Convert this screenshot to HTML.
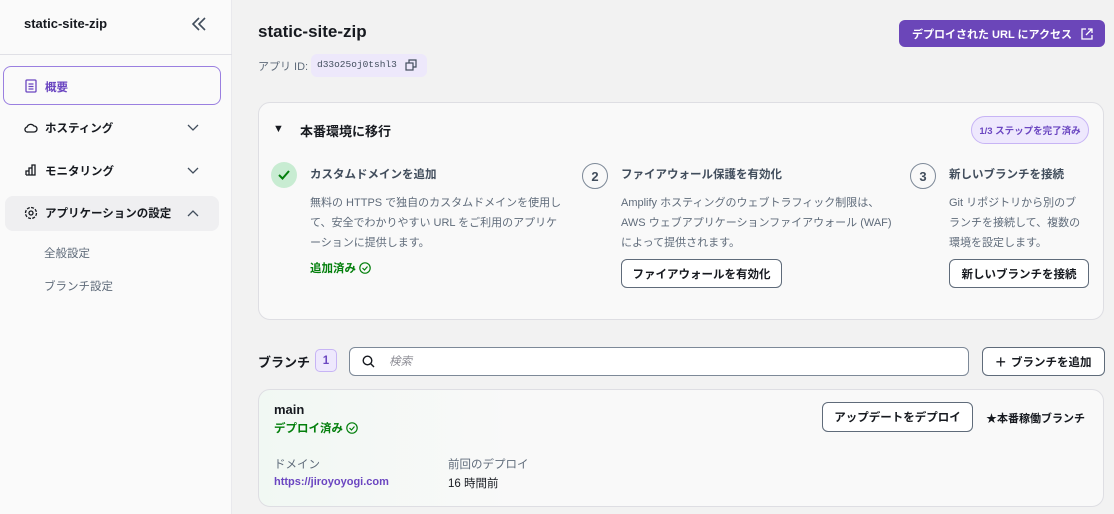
<!DOCTYPE html>
<html><head><meta charset="utf-8"><style>
*{box-sizing:border-box;margin:0;padding:0}
body{width:1114px;height:514px;overflow:hidden;background:#f2f2f2;font-family:"Liberation Sans","Noto Sans CJK JP",sans-serif;color:#16191f;position:relative;font-size:11.5px}
.a{position:absolute;white-space:nowrap}
.side{left:0;top:0;width:232px;height:514px;background:#fafafa;border-right:1px solid #e9e9ed}
.b{font-weight:700}
.card{background:#f9f9f9;border:1px solid #dedee3;border-radius:12px}
.btn{border:1px solid #5f6b7a;border-radius:6px;background:#fff;font-weight:700;font-size:11.5px;display:flex;align-items:center;justify-content:center}
.gray{color:#5f6b7a}
.p{font-size:11px;line-height:20px;color:#5f6b7a;white-space:normal}
.num{width:26px;height:26px;border:1px solid #7d8998;border-radius:50%;display:flex;align-items:center;justify-content:center;font-size:13px;font-weight:700;color:#414d5c}
</style></head><body>
<div class="a side">
 <div class="a b" style="left:24px;top:16px;font-size:13px">static-site-zip</div>
 <svg class="a" style="left:192px;top:17px" width="14" height="14" viewBox="0 0 14 14" fill="none" stroke="#414d5c" stroke-width="1.6"><path d="M7 1L1 7l6 6M13 1L7 7l6 6"/></svg>
 <div class="a" style="left:0;top:54px;width:232px;border-top:1px solid #e0e0e6"></div>
 <div class="a" style="left:3px;top:66px;width:218px;height:39px;border:1.5px solid #9a7fe0;border-radius:8px;background:#fafafa"></div>
 <svg class="a" style="left:25px;top:79px" width="12" height="14" viewBox="0 0 12 14" fill="none" stroke="#6b46c1" stroke-width="1.3"><rect x="1" y="1" width="10" height="12" rx="1"/><path d="M3.5 5h5M3.5 7.5h5M3.5 10h5"/></svg>
 <div class="a b" style="left:45px;top:79px;color:#6b46c1">概要</div>
 <svg class="a" style="left:24px;top:122px" width="14" height="12" viewBox="0 0 14 12" fill="none" stroke="#16191f" stroke-width="1.3"><path d="M4 10h6a3 3 0 000-6 4 4 0 00-7 1 2.5 2.5 0 001 5z"/></svg>
 <div class="a b" style="left:45px;top:120px">ホスティング</div>
 <svg class="a" style="left:187px;top:124px" width="12" height="8" fill="none" stroke="#414d5c" stroke-width="1.3"><path d="M1 1l5 5 5-5"/></svg>
 <svg class="a" style="left:25px;top:164px" width="12" height="12" fill="none" stroke="#16191f" stroke-width="1.3"><path d="M1 11V7h3v4M4 11V4h3v7M7 11V1h3v10H1"/></svg>
 <div class="a b" style="left:45px;top:163px">モニタリング</div>
 <svg class="a" style="left:187px;top:167px" width="12" height="8" fill="none" stroke="#414d5c" stroke-width="1.3"><path d="M1 1l5 5 5-5"/></svg>
 <div class="a" style="left:5px;top:196px;width:214px;height:35px;background:#efeff1;border-radius:8px"></div>
 <svg class="a" style="left:24px;top:206px" width="14" height="14" viewBox="0 0 14 14" fill="none" stroke="#16191f" stroke-width="1.3"><circle cx="7" cy="7" r="2"/><circle cx="7" cy="7" r="5.5" stroke-dasharray="3 1.3"/></svg>
 <div class="a b" style="left:45px;top:205px">アプリケーションの設定</div>
 <svg class="a" style="left:187px;top:209px" width="12" height="8" fill="none" stroke="#414d5c" stroke-width="1.3"><path d="M1 7l5-5 5 5"/></svg>
 <div class="a gray" style="left:44px;top:245px">全般設定</div>
 <div class="a gray" style="left:44px;top:278px">ブランチ設定</div>
</div>

<div class="a b" style="left:258px;top:22px;font-size:17px">static-site-zip</div>
<div class="a gray" style="left:258px;top:58px;font-size:11px">アプリ ID:</div>
<div class="a" style="left:311px;top:54px;width:116px;height:23px;background:#ede8fb;border-radius:6px"></div>
<div class="a" style="left:317px;top:59px;font-family:'Liberation Mono',monospace;font-size:9.5px;color:#414d5c">d33o25oj0tshl3</div>
<svg class="a" style="left:405px;top:59px" width="12" height="12" fill="none" stroke="#414d5c" stroke-width="1.2"><rect x="1" y="4" width="7" height="7"/><path d="M4 4V1h7v7H8"/></svg>
<div class="a b" style="left:899px;top:20px;width:206px;height:27px;background:#6b46b9;border-radius:6px;color:#fff;font-size:11px;display:flex;align-items:center;padding-left:13px">デプロイされた URL にアクセス
 <svg style="margin-left:9px" width="12" height="12" fill="none" stroke="#fff" stroke-width="1.3"><path d="M5 1H1v10h10V7M7 1h4v4M11 1L5 7"/></svg></div>

<div class="a card" style="left:258px;top:102px;width:846px;height:218px"></div>
<div class="a" style="left:273px;top:123px;font-size:11px">▼</div>
<div class="a b" style="left:300px;top:121px;font-size:13px">本番環境に移行</div>
<div class="a b" style="left:971px;top:116px;width:118px;height:28px;border:1px solid #c7b4f5;background:#eee8fd;border-radius:14px;color:#6b46c1;font-size:9.5px;display:flex;align-items:center;justify-content:center">1/3 ステップを完了済み</div>

<div class="a" style="left:271px;top:162px;width:26px;height:26px;border-radius:50%;background:#c8ecd2"></div>
<svg class="a" style="left:278px;top:170px" width="12" height="10" fill="none" stroke="#037f0c" stroke-width="2"><path d="M1 5l3.5 3.5L11 1"/></svg>
<div class="a b" style="left:310px;top:166px;color:#414d5c">カスタムドメインを追加</div>
<div class="a p" style="left:310px;top:193px;width:258px">無料の HTTPS で独自のカスタムドメインを使用して、安全でわかりやすい URL をご利用のアプリケーションに提供します。</div>
<div class="a b" style="left:310px;top:260px;color:#037f0c">追加済み <svg width="12" height="12" style="vertical-align:-2px" fill="none" stroke="#037f0c" stroke-width="1.2"><circle cx="6" cy="6" r="5.2"/><path d="M3.5 6l2 2 3-3.5"/></svg></div>

<div class="a num" style="left:582px;top:163px">2</div>
<div class="a b" style="left:621px;top:166px;color:#414d5c">ファイアウォール保護を有効化</div>
<div class="a p" style="left:621px;top:193px;width:275px">Amplify ホスティングのウェブトラフィック制限は、<br>AWS ウェブアプリケーションファイアウォール (WAF) によって提供されます。</div>
<div class="a btn" style="left:621px;top:259px;width:161px;height:29px">ファイアウォールを有効化</div>

<div class="a num" style="left:910px;top:163px">3</div>
<div class="a b" style="left:949px;top:166px;color:#414d5c">新しいブランチを接続</div>
<div class="a p" style="left:949px;top:193px;width:138px">Git リポジトリから別のブランチを接続して、複数の環境を設定します。</div>
<div class="a btn" style="left:949px;top:259px;width:140px;height:29px">新しいブランチを接続</div>

<div class="a b" style="left:258px;top:352px;font-size:13px">ブランチ</div>
<div class="a b" style="left:315px;top:349px;width:22px;height:23px;border:1px solid #c7b4f5;background:#eee8fd;border-radius:5px;color:#6b46c1;display:flex;align-items:center;justify-content:center">1</div>
<div class="a" style="left:349px;top:347px;width:620px;height:29px;border:1px solid #7d8998;border-radius:6px;background:#fff"></div>
<svg class="a" style="left:362px;top:355px" width="13" height="13" fill="none" stroke="#16191f" stroke-width="1.4"><circle cx="5.5" cy="5.5" r="4.3"/><path d="M8.5 8.5l3.5 3.5"/></svg>
<div class="a" style="left:389px;top:353px;color:#8c8c94;font-style:italic">検索</div>
<div class="a btn" style="left:982px;top:347px;width:123px;height:29px"><span style="font-weight:400;font-size:18px;margin-right:5px;line-height:1">+</span>ブランチを追加</div>

<div class="a card" style="left:258px;top:389px;width:846px;height:118px;background:linear-gradient(90deg,#f1f8f3,#f9f9f9 30%)"></div>
<div class="a b" style="left:274px;top:402px;font-size:13px">main</div>
<div class="a b" style="left:274px;top:420px;color:#037f0c">デプロイ済み <svg width="12" height="12" style="vertical-align:-2px" fill="none" stroke="#037f0c" stroke-width="1.2"><circle cx="6" cy="6" r="5.2"/><path d="M3.5 6l2 2 3-3.5"/></svg></div>
<div class="a btn" style="left:822px;top:402px;width:151px;height:30px">アップデートをデプロイ</div>
<div class="a b" style="left:986px;top:410px;font-size:11px">★本番稼働ブランチ</div>
<div class="a gray" style="left:274px;top:456px">ドメイン</div>
<div class="a b" style="left:274px;top:476px;color:#6b46c1;font-size:11px">https://jiroyoyogi.com</div>
<div class="a gray" style="left:448px;top:456px">前回のデプロイ</div>
<div class="a" style="left:448px;top:475px">16 時間前</div>
</body></html>
